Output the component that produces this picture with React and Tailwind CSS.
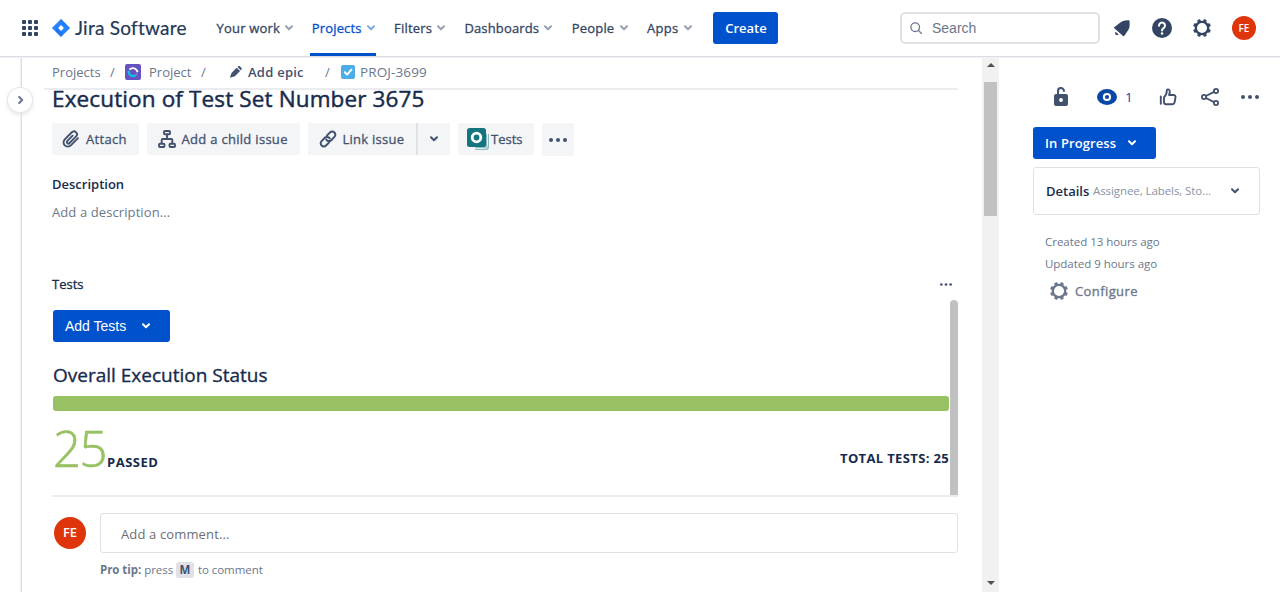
import React from "react";

function Chevron({ className = "", w = 2 }) {
  return (
    <svg viewBox="0 0 8 6" className={"h-[6px] w-[8px] shrink-0 " + className} fill="none" stroke="currentColor" strokeWidth={w} strokeLinecap="round" strokeLinejoin="round">
      <path d="M1 1.2 4 4.2 7 1.2" />
    </svg>
  );
}

function Dots({ className = "" }) {
  return (
    <svg viewBox="0 0 18 4" className={className} fill="currentColor">
      <circle cx="2" cy="2" r="2" />
      <circle cx="9" cy="2" r="2" />
      <circle cx="16" cy="2" r="2" />
    </svg>
  );
}

function Gear({ className = "" }) {
  return (
    <svg viewBox="0 0 18 18" className={className} fill="none" stroke="currentColor">
      <circle cx="9" cy="9" r="6.200" strokeWidth="2.300" />
      {[22.5, 67.5, 112.5, 157.5, 202.5, 247.5, 292.5, 337.5].map((a) => (
        <path key={a} d="M7.800 2.400 8 .6h2L10.200 2.400Z" fill="currentColor" strokeWidth="1.100" strokeLinejoin="round" transform={`rotate(${a} 9 9)`} />
      ))}
    </svg>
  );
}

const nav = [
  { label: "Your work", box: "w-[76px]", text: "tracking-[0.2px]" },
  { label: "Projects", box: "w-[63px]", text: "tracking-[0.15px]", active: true },
  { label: "Filters", box: "w-[51px]", text: "tracking-[0.2px]" },
  { label: "Dashboards", box: "w-[88px]", text: "tracking-[0.15px]" },
  { label: "People", box: "w-[56px]", text: "tracking-[0.2px]" },
  { label: "Apps", box: "w-[45px]", text: "tracking-[0.3px]" },
];

function Header() {
  return (
    <header className="relative z-10 flex h-[56px] shrink-0 items-center bg-white shadow-[0_1px_0_#dcdee4,0_2px_1px_#f0f1f4]">
      <svg viewBox="0 0 16 16" className="ml-[22px] h-[16px] w-[16px] shrink-0" fill="#344563">
        {[0, 6, 12].map((y) => [0, 6, 12].map((x) => <rect key={x + "-" + y} x={x} y={y} width="4" height="4" rx="1" />))}
      </svg>
      <svg viewBox="0 0 18 18" className="ml-[14px] h-[18px] w-[18px] shrink-0">
        <defs>
          <linearGradient id="jl" x1="0.9" y1="0" x2="0.4" y2="0.8">
            <stop offset="0" stopColor="#0052cc" />
            <stop offset="1" stopColor="#2684ff" />
          </linearGradient>
        </defs>
        <path d="M9 0 17.6 8.4a.8.8 0 0 1 0 1.2L9 18 .4 9.6a.8.8 0 0 1 0-1.2Z" fill="#2684ff" />
        <path d="M9 0C7.2 1.8 7.2 4.400 9 6.300L12.200 9.400 15 6Z" fill="url(#jl)" opacity=".4" />
        <path d="M9 18c1.800-1.800 1.800-4.400 0-6.300L5.800 8.600 3 12Z" fill="#0052cc" opacity=".25" />
        <path d="M9 6.100 11.900 9 9 11.900 6.100 9Z" fill="#fff" />
      </svg>
      <div className="ml-[5px] w-[112px] whitespace-nowrap font-['Lato',sans-serif] text-[19px] leading-6 tracking-[0.25px] text-[#253858] [-webkit-text-stroke:0.2px]">Jira Software</div>
      <nav className="ml-[29.500px] flex h-full gap-[19.300px]">
        {nav.map((n) => (
          <div key={n.label} className={"relative flex h-full items-center justify-between whitespace-nowrap text-[13px] [-webkit-text-stroke:0.3px] " + n.box + (n.active ? " text-[#0052cc]" : " text-[#344563]")}>
            <span className={"pt-px " + n.text}>{n.label}</span>
            <Chevron className="opacity-50" />
            {n.active && <div className="absolute -left-[2px] -right-[1px] bottom-0 h-[3px] bg-[#0052cc]" />}
          </div>
        ))}
      </nav>
      <button className="ml-[21.500px] h-[32px] w-[65px] shrink-0 rounded-[3px] bg-[#0052cc] pt-px text-[13px] font-semibold text-white">Create</button>
      <div className="ml-auto flex h-[32px] w-[200px] shrink-0 items-center rounded-[5px] border-2 border-[#dfe1e6] bg-white pl-[8px]">
        <svg viewBox="0 0 12 12" className="h-[12px] w-[12px]" fill="none" stroke="#6b778c" strokeWidth="1.3" strokeLinecap="round">
          <circle cx="5.200" cy="5.200" r="4.300" />
          <path d="m8.500 8.500 3 3" />
        </svg>
        <span className="ml-[10px] font-['Liberation_Sans',sans-serif] text-[14px] text-[#6b778c]">Search</span>
      </div>
      <svg viewBox="0 0 18 18" className="ml-[13px] h-[18px] w-[18px] shrink-0" fill="#344563">
        <path d="M15.300 1.200c.9 0 1.300.4 1.300 1.200V6.500c0 1.800-.6 3.300-1.500 4.700l-3.700 5.600c-.4.500-.9.500-1.300.1L1.300 9.300c-.5-.5-.4-1 .2-1.300L7 3.800c1.800-1.300 3.300-2.100 5.300-2.400Z" />
        <path d="M2.600 12.700 5.600 15.600a2 2 0 0 1-2.900-.1 2 2 0 0 1-.1-2.800Z" />
      </svg>
      <svg viewBox="0 0 20 20" className="ml-[21px] h-[20px] w-[20px] shrink-0">
        <circle cx="10" cy="10" r="10" fill="#344563" />
        <path d="M7 7.700a3 3 0 1 1 4.700 2.400c-1.100.8-1.700 1.200-1.700 2.300" fill="none" stroke="#fff" strokeWidth="2" strokeLinecap="round" />
        <circle cx="10" cy="15.400" r="1.250" fill="#fff" />
      </svg>
      <Gear className="ml-[21px] h-[18px] w-[18px] shrink-0 text-[#344563]" />
      <div className="ml-[21px] mr-[24px] flex h-[24px] w-[24px] shrink-0 items-center justify-center rounded-full bg-[#de350b] text-[10px] font-semibold text-white">FE</div>
    </header>
  );
}

function Breadcrumbs() {
  return (
    <div className="ml-[-8px] flex h-[34px] w-[914px] shrink-0 items-center whitespace-nowrap border-b-2 border-[#ebecf0] pl-[8px] text-[13px] text-[#6b778c]">
      <span className="w-[58px] pt-px">Projects</span>
      <span className="w-[15px] pt-px">/</span>
      <svg viewBox="0 0 16 16" className="h-[16px] w-[16px] shrink-0" fill="none">
        <rect width="16" height="16" rx="2" fill="#6554c0" />
        <path d="M4.500 5.700C6.500 3.500 10 3.600 11.800 6.300L12.600 8.200" stroke="#fff" strokeWidth="1.900" />
        <path d="M3.600 6.800C3.300 11.500 8 13.400 11.200 10.700" stroke="#00c7e6" strokeWidth="1.900" />
        <path d="M10.200 10.200 12.800 9l-.8 3Z" fill="#8777d9" />
      </svg>
      <span className="ml-[8px] w-[52px] pt-px">Project</span>
      <span className="w-[29px] pt-px">/</span>
      <svg viewBox="0 0 12 12" className="h-[12px] w-[12px] shrink-0" fill="#42526e">
        <path d="M1.500 6.900 6.700 1.700l3.400 3.400-5.200 5.200L.6 11.600c-.4.100-.6-.1-.5-.5ZM7.500.9l.6-.5c.6-.5 1.400-.5 2 .1l1.200 1.200c.6.6.6 1.400.1 2l-.6.600Z" />
      </svg>
      <span className="ml-[6px] w-[77px] pt-px font-semibold tracking-[0.25px] text-[#42526e]">Add epic</span>
      <span className="w-[16px] pt-px">/</span>
      <svg viewBox="0 0 14 14" className="h-[14px] w-[14px] shrink-0">
        <rect width="14" height="14" rx="2" fill="#4bade8" />
        <path d="m3.800 7.300 2.300 2.300 4.300-5" fill="none" stroke="#fff" strokeWidth="2" strokeLinecap="round" strokeLinejoin="round" />
      </svg>
      <span className="ml-[5px] pt-px text-[13.500px] tracking-[0.12px]">PROJ-3699</span>
    </div>
  );
}

function Actions() {
  const b = "flex h-[32px] items-center whitespace-nowrap bg-[#f4f5f7] ";
  return (
    <div className="mt-[9px] flex h-[33px] items-start gap-[8px] text-[13px] tracking-[0.3px] text-[#42526e]">
      <button className={b + "w-[87px] rounded-[3px] pl-[10px]"}>
        <svg viewBox="0 0 18 18" className="mr-[6px] h-[18px] w-[18px]" fill="none" stroke="currentColor" strokeWidth="1.900" strokeLinecap="round">
          <path d="m16 8.200-6.900 6.900c-1.800 1.800-4.600 2-6.300.3s-1.600-4.500.2-6.300l6.600-6.600c1.300-1.300 3.300-1.400 4.500-.2s1.100 3.100-.2 4.400l-6.300 6.300c-.7.7-1.700.7-2.300.1s-.6-1.500.1-2.200l5.200-5.200" />
        </svg>
        <span className="pt-px [-webkit-text-stroke:0.3px]">Attach</span>
      </button>
      <button className={b + "w-[153px] rounded-[3px] pl-[11px]"}>
        <svg viewBox="0 0 18 18" className="mr-[5.500px] h-[18px] w-[18px]" fill="none" stroke="currentColor" strokeWidth="1.900">
          <rect x="6" y="1" width="6" height="3.200" rx="1" />
          <rect x="1" y="13.800" width="5.500" height="3.200" rx="1" />
          <rect x="11.500" y="13.800" width="5.500" height="3.200" rx="1" />
          <path d="M9 4.500V9M3.700 13.500V10q0-1 1-1h8.600q1 0 1 1v3.500" />
        </svg>
        <span className="pt-px [-webkit-text-stroke:0.3px]">Add a child issue</span>
      </button>
      <div className="flex h-[32px] gap-[2px] rounded-[3px] bg-[#dfe1e6]">
        <button className={b + "w-[108px] rounded-l-[3px] pl-[11px]"}>
          <svg viewBox="0 0 18 18" className="mr-[5.500px] h-[18px] w-[18px]" fill="none" stroke="currentColor" strokeWidth="2" strokeLinecap="round">
            <path d="M8 5.400 11 2.500a3.100 3.100 0 0 1 4.400 0 3.100 3.100 0 0 1 0 4.400l-3.200 3.300a3.100 3.100 0 0 1-4.400 0l-.5-.6" />
            <path d="M10 12.600 7 15.500a3.100 3.100 0 0 1-4.400 0 3.100 3.100 0 0 1 0-4.400l3.200-3.300a3.100 3.100 0 0 1 4.400 0l.5.6" />
          </svg>
          <span className="pt-px tracking-[0.25px] [-webkit-text-stroke:0.3px]">Link issue</span>
        </button>
        <button className={b + "w-[32px] justify-center rounded-r-[3px]"}>
          <Chevron />
        </button>
      </div>
      <button className={b + "w-[76px] rounded-[3px] pl-[9px]"}>
        <svg viewBox="0 0 22 22" className="mr-[2px] h-[22px] w-[22px]">
          <rect x="3" y="3" width="19" height="19" rx="3" fill="#8cb9bf" />
          <path d="M20.500 3v14.500a3 3 0 0 1-3 3H9" fill="none" stroke="#fff" strokeWidth=".8" />
          <path d="M19 0h3v6h-3ZM0 19h8.500v3H0Z" fill="#f4f5f7" />
          <rect width="19" height="19" rx="2.500" fill="#14757f" />
          <circle cx="9.500" cy="9.500" r="4.300" fill="none" stroke="#fff" strokeWidth="2.800" />
        </svg>
        <span className="pt-px tracking-normal [-webkit-text-stroke:0.3px]">Tests</span>
      </button>
      <button className={b + "h-[33px] w-[32px] justify-center rounded-[3px] pt-px"}>
        <Dots className="h-[4px] w-[18px]" />
      </button>
    </div>
  );
}

function Main() {
  return (
    <main className="flex w-[960px] shrink-0 flex-col pl-[30px] text-[#172b4d]">
      <Breadcrumbs />
      <div className="h-[24px]">
        <h1 className="mt-[-6px] whitespace-nowrap text-[22.500px] leading-[30px] tracking-[0.13px] [-webkit-text-stroke:0.45px]">Execution of Test Set Number 3675</h1>
      </div>
      <Actions />
      <h2 className="mt-[18px] text-[13px] font-semibold leading-5">Description</h2>
      <p className="mt-[8px] text-[13px] leading-5 tracking-[0.1px] text-[#6b778c]">Add a description...</p>
      <div className="mt-[52px] flex w-[906px] items-center justify-between pr-[6px]">
        <h2 className="text-[13px] leading-5 [-webkit-text-stroke:0.3px]">Tests</h2>
        <Dots className="h-[3px] w-[12px] text-[#42526e]" />
      </div>
      <section className="mt-[6px] flex h-[197px] w-[906px] shrink-0 border-b-2 border-[#ebecf0]">
        <div className="ml-[1px] w-[896px]">
          <button className="mt-[10px] flex h-[32px] w-[117px] items-center rounded-[3px] bg-[#0052cc] pl-[12px] font-['Liberation_Sans',sans-serif] text-[14px] text-white">
            <span className="w-[77px] text-left">Add Tests</span>
            <Chevron />
          </button>
          <h3 className="mt-[21px] text-[19px] leading-6 [-webkit-text-stroke:0.35px]">Overall Execution Status</h3>
          <div className="mt-[9px] h-[15px] rounded-[3px] bg-[#97c163]" />
          <div className="flex h-[76px] items-start justify-between text-[13px] font-bold leading-5">
            <div className="flex items-start">
              <span className="mt-[7px] w-[54px] text-[49px] font-light leading-[60px] tracking-[-1.500px] text-[#97c163] [-webkit-text-stroke:0.6px]">25</span>
              <span className="mt-[41px] tracking-[0.5px]">PASSED</span>
            </div>
            <span className="mt-[37px] tracking-[0.35px]">TOTAL TESTS: 25</span>
          </div>
        </div>
        <div className="ml-[1px] h-[195px] w-[8px] rounded-t-full bg-[#c1c1c1]" />
      </section>
      <div className="mt-[16px] flex w-[906px]">
        <div className="ml-[2px] mt-[4px] flex h-[32px] w-[32px] items-center justify-center rounded-full bg-[#de350b] text-[13px] font-semibold text-white">FE</div>
        <div className="ml-[14px] flex h-[40px] w-[858px] items-center rounded-[3px] border border-[#dfe1e6] pl-[20px] pt-[3px] text-[13px] tracking-[0.14px] text-[#6b6e76]">Add a comment...</div>
      </div>
      <p className="ml-[48px] mt-[9px] flex h-[16px] items-center whitespace-pre text-[11.500px] tracking-[-0.05px] text-[#6b778c]">
        <b>Pro tip:</b> press <span className="mr-[1px] flex h-[16px] w-[18px] items-center justify-center rounded-[3px] bg-[#dfe1e6] font-bold text-[#42526e]">M</span> to comment
      </p>
    </main>
  );
}

function Side() {
  return (
    <aside className="flex w-[281px] shrink-0 flex-col pl-[34px] text-[#42526e]">
      <div className="mt-[30px] flex h-[22px] items-center">
        <svg viewBox="0 0 14 19" className="mb-[2px] ml-[21px] h-[19px] w-[14px]">
          <rect y="7" width="14" height="12" rx="2" fill="currentColor" />
          <path d="M4 8V4.200a3 3 0 0 1 6-.2" fill="none" stroke="currentColor" strokeWidth="2" strokeLinecap="round" />
          <circle cx="7" cy="13" r="1.900" fill="#fff" />
        </svg>
        <svg viewBox="0 0 20 16" className="ml-[29px] h-[16px] w-[20px]">
          <ellipse cx="10" cy="8" rx="10" ry="7.900" fill="#0747a6" />
          <circle cx="10" cy="8" r="3.100" fill="none" stroke="#fff" strokeWidth="2" />
        </svg>
        <span className="ml-[8px] w-[8px] text-[13.500px] text-[#0747a6]">1</span>
        <svg viewBox="0 0 18 18" className="ml-[26px] h-[18px] w-[18px]" fill="none" stroke="currentColor" strokeWidth="1.900" strokeLinejoin="round" strokeLinecap="round">
          <path d="M1.800 8.500v7.300M5 9.200C7 7.500 7.800 5 7.800 2.700c0-2 3-1.700 3 .8 0 1.600-.3 2.500-.8 3.500h4.500c1.300 0 2.200 1 2 2.200l-.9 5.200c-.2 1.200-1 1.800-2.200 1.800H7.200c-1.300 0-2.200-.8-2.200-2Z" />
        </svg>
        <svg viewBox="0 0 18 18" className="ml-[24px] h-[18px] w-[18px]" fill="none" stroke="currentColor" strokeWidth="1.800">
          <circle cx="3" cy="9" r="2.100" />
          <circle cx="15" cy="3" r="2.100" />
          <circle cx="15" cy="15" r="2.100" />
          <path d="m4.900 8 8.200-4.100M4.900 10l8.200 4.100" />
        </svg>
        <Dots className="ml-[22px] h-[4px] w-[18px]" />
      </div>
      <button className="mt-[19px] flex h-[32px] w-[123px] shrink-0 items-center rounded-[3px] bg-[#0052cc] pl-[12px] text-[13px] font-semibold text-white">
        <span className="w-[83px] whitespace-nowrap pt-px text-left tracking-[0.1px]">In Progress</span>
        <Chevron />
      </button>
      <div className="mt-[8px] flex h-[48px] w-[227px] shrink-0 items-center whitespace-nowrap rounded-[3px] border border-[#dfe1e6] pl-[12px]">
        <span className="w-[47px] pt-px text-[13px] font-semibold text-[#172b4d]">Details</span>
        <span className="w-[138px] text-[11.500px] tracking-[-0.08px] text-[#8993a4]">Assignee, Labels, Sto...</span>
        <Chevron />
      </div>
      <div className="ml-[12px] mt-[16px] text-[11.500px] leading-[22px] tracking-[-0.03px] text-[#6b778c]">
        <p>Created 13 hours ago</p>
        <p>Updated 9 hours ago</p>
      </div>
      <div className="ml-[17px] mt-[6px] flex h-[20px] items-center text-[13px] text-[#6b778c]">
        <Gear className="h-[18px] w-[18px]" />
        <span className="ml-[7px] pt-px tracking-[0.4px] [-webkit-text-stroke:0.35px]">Configure</span>
      </div>
    </aside>
  );
}

export default function App() {
  return (
    <div className="flex h-[592px] w-[1280px] flex-col overflow-hidden bg-white font-['Open_Sans',sans-serif]">
      <Header />
      <div className="flex h-[536px]">
        <div className="relative w-[22px] shrink-0 border-r border-[#dcdde1] shadow-[inset_-1px_0_0_#f3f3f5]">
          <button className="absolute left-[8px] top-[32px] flex h-[24px] w-[24px] items-center justify-center rounded-full bg-white pl-px text-[#6b778c] shadow-[0_0_0_1px_#e4e6ea,0_2px_4px_1px_#e4e6ea]">
            <Chevron className="-rotate-90" />
          </button>
        </div>
        <Main />
        <div className="flex w-[17px] shrink-0 flex-col items-center bg-[#f1f1f1]">
          <svg viewBox="0 0 8 4" className="mt-[7px] h-[4px] w-[8px]" fill="#505050"><path d="M4 0 8 4H0Z" /></svg>
          <div className="mt-[15px] h-[134px] w-[13px] bg-[#c1c1c1]" />
          <svg viewBox="0 0 8 4" className="mb-[7px] mt-auto h-[4px] w-[8px]" fill="#505050"><path d="M0 0h8L4 4Z" /></svg>
        </div>
        <Side />
      </div>
    </div>
  );
}
